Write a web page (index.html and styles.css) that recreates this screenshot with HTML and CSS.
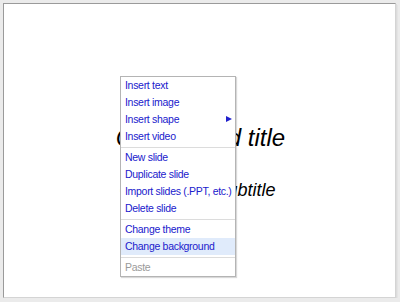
FILE: index.html
```html
<!DOCTYPE html>
<html lang="en">
<head>
    <meta charset="UTF-8">
    <title>Slide</title>
    <link rel="stylesheet" href="styles.css">
</head>
<body>
    <div class="slide">
        <div class="title">Click to add title</div>
        <div class="subtitle">Click to add subtitle</div>

        <ul class="context-menu">
            <li>Insert text</li>
            <li>Insert image</li>
            <li class="has-sub">Insert shape <span class="arrow"></span></li>
            <li>Insert video</li>
            <li class="sep"></li>
            <li>New slide</li>
            <li>Duplicate slide</li>
            <li>Import slides (.PPT, etc.)</li>
            <li>Delete slide</li>
            <li class="sep"></li>
            <li>Change theme</li>
            <li class="hover">Change background</li>
            <li class="sep"></li>
            <li class="disabled">Paste</li>
        </ul>
    </div>
</body>
</html>
```

FILE: styles.css
```css
body {
    margin: 0;
    background-color: #ebebeb;
    font-family: "Liberation Sans", Arial, sans-serif;
}

.slide {
    position: relative;
    margin: 3px 4px 0 3px;
    height: 293px;
    background-color: white;
    border-top: 1px solid #9a9a9a;
    border-left: 1px solid #9a9a9a;
    border-right: 1px solid #d4d4d4;
    border-bottom: 1px solid #d4d4d4;
    box-shadow: 1px 1px 0 #dcdcdc, 2px 2px 0 #e4e4e4;
}

.title {
    padding-top: 120px;
    text-align: center;
    font-style: italic;
    font-size: 24px;
    padding-left: 2px;
}

.subtitle {
    margin-top: 28px;
    text-align: center;
    font-style: italic;
    font-size: 18px;
    padding-right: 4px;
}

.context-menu {
    position: absolute;
    left: 116px;
    top: 72px;
    width: 114px;
    margin: 0;
    padding: 0;
    list-style: none;
    background-color: white;
    border: 1px solid #b4b4b4;
    box-shadow: 1px 1px 1px rgba(0, 0, 0, 0.15);
    font-size: 10.5px;
    letter-spacing: -0.3px;
}

.context-menu li {
    position: relative;
    height: 17px;
    line-height: 17px;
    padding-left: 4px;
    color: #2020cc;
    white-space: nowrap;
}

.context-menu li.sep {
    height: 1px;
    margin: 2px 0 1px;
    padding: 0;
    background-color: #dcdcdc;
}

.context-menu li.hover {
    background-color: #e0ebfb;
}

.context-menu li.disabled {
    color: #9a9a9a;
}

.arrow {
    position: absolute;
    right: 3px;
    top: 5px;
    width: 0;
    height: 0;
    border-top: 3.5px solid transparent;
    border-bottom: 3.5px solid transparent;
    border-left: 6px solid #2020cc;
}
```
